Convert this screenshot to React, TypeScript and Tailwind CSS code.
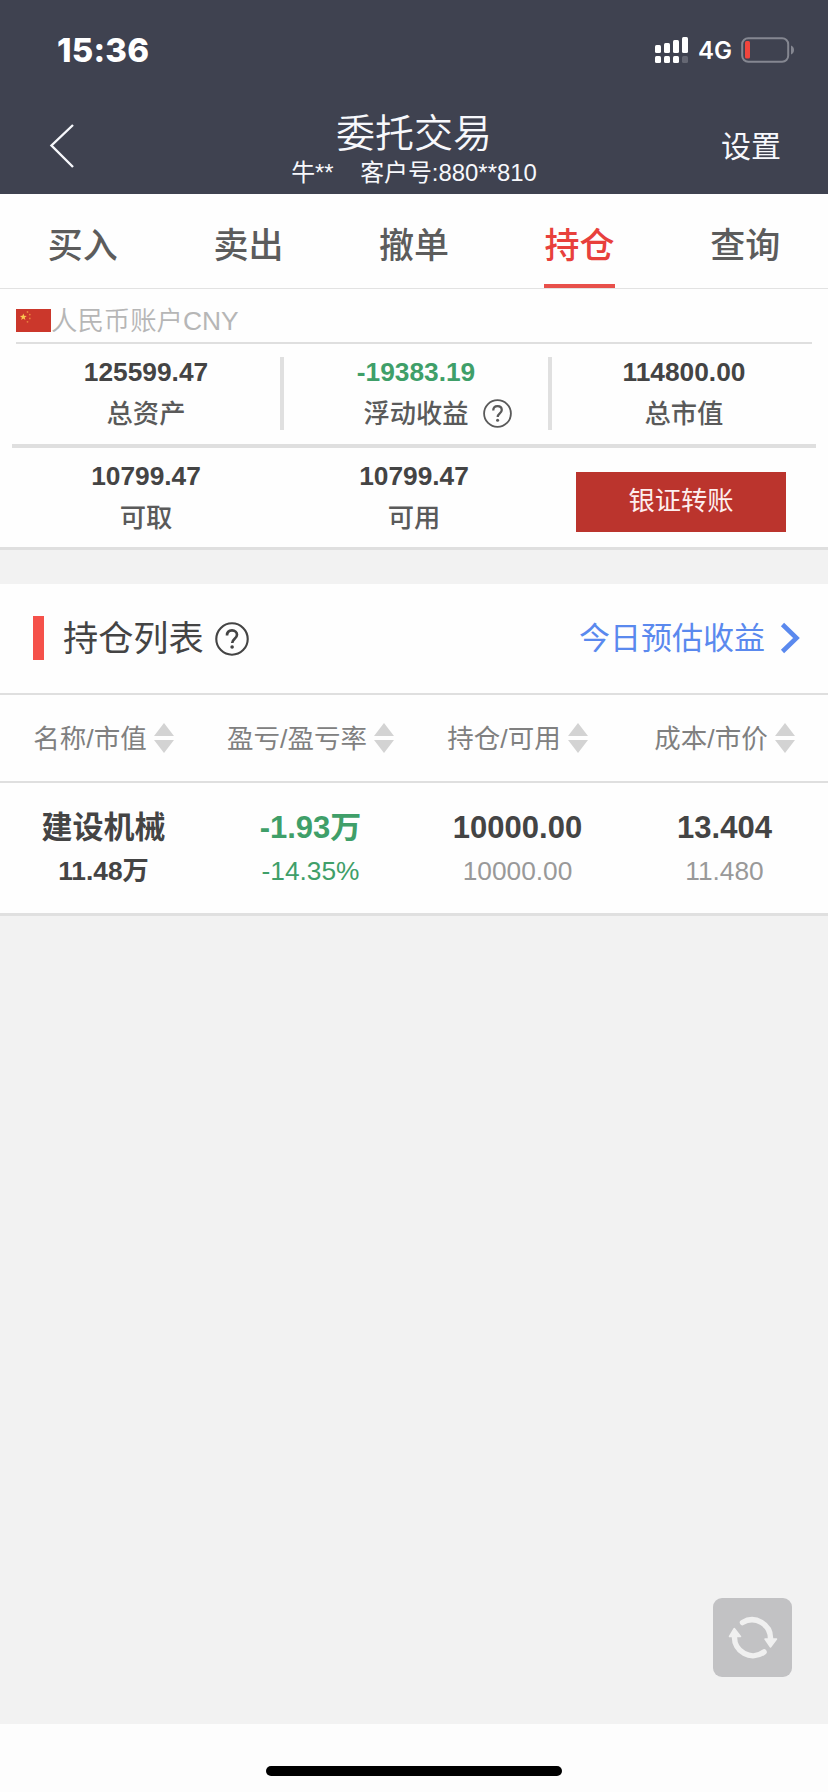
import React from "react";

const tabs = ["买入", "卖出", "撤单", "持仓", "查询"];
const columns = ["名称/市值", "盈亏/盈亏率", "持仓/可用", "成本/市价"];

function HelpIcon({ className, stroke }: { className: string; stroke: number }) {
  return (
    <svg viewBox="0 0 32 32" className={className} fill="none" stroke="currentColor" strokeWidth={stroke}>
      <circle cx="16" cy="16" r="14.8" />
      <path d="M11.3 12.8C11.3 9.6 13.3 7.9 16 7.9c2.800 0 4.700 1.700 4.700 4.200 0 3.700-4.500 3.700-4.500 7.700" strokeWidth="2.500" />
      <circle cx="16.100" cy="23.500" r="1.700" fill="currentColor" stroke="none" />
    </svg>
  );
}

function SortIcon() {
  return (
    <svg viewBox="0 0 20 30" className="ml-[7px] h-[30px] w-5 shrink-0 fill-[#d3d3d3]">
      <path d="M10 0L20 13H0zM0 17h20L10 30z" />
    </svg>
  );
}

function Flag() {
  return (
    <svg viewBox="0 0 35 23" className="h-[23px] w-[35px] shrink-0">
      <rect width="35" height="23" fill="#cb372b" />
      <path d="M7.300 4.500l.9 2.300 2.500.1-2 1.500.7 2.500-2.100-1.400-2.100 1.400.7-2.500-2-1.500 2.500-.1z" fill="#fbc750" />
      <g fill="#e8803f">
        <circle cx="11.500" cy="3" r="0.900" />
        <circle cx="13.800" cy="5.600" r="0.900" />
        <circle cx="13.800" cy="9.400" r="0.900" />
        <circle cx="11.500" cy="12.800" r="0.900" />
      </g>
    </svg>
  );
}

function Stat({ value, label, green, divider, help }: { value: string; label: string; green?: boolean; divider?: boolean; help?: boolean }) {
  return (
    <div className={"flex h-[73px] w-1/3 flex-col items-center " + (divider ? "border-l-4 border-[#e0e0e0]" : "")}>
      <div className={"h-[35px] shrink-0 text-[26.300px] leading-[30px] font-bold " + (green ? "text-[#3f9f69]" : "text-[#444]")}>{value}</div>
      <div className="flex h-[44px] shrink-0 items-center text-[26.300px] leading-[44px] font-medium text-[#5a5a5a]">
        {label}
        {help && <HelpIcon className="-mt-px -mr-[43px] ml-[14px] h-[29px] w-[29px]" stroke={2} />}
      </div>
    </div>
  );
}

function Figure({ text, unit }: { text: string; unit?: string }) {
  return (
    <>
      {text}
      {unit && <span className="font-semibold">{unit}</span>}
    </>
  );
}

function Cell({ top, topUnit, bottom, bottomUnit, tone }: { top: string; topUnit?: string; bottom: string; bottomUnit?: string; tone: string }) {
  return (
    <div className={"flex w-1/4 flex-col items-center " + (tone === "green" ? "text-[#3f9f69]" : "text-[#444]")}>
      <div className="h-[43px] text-[31px] leading-[44px] font-bold">
        <Figure text={top} unit={topUnit} />
      </div>
      <div className={"h-[44px] text-[26.300px] leading-[44px] " + (tone === "name" ? "font-bold" : tone === "gray" ? "text-[#999]" : "")}>
        <Figure text={bottom} unit={bottomUnit} />
      </div>
    </div>
  );
}

export default function App() {
  return (
    <div className="flex h-[1792px] w-[828px] flex-col overflow-hidden bg-[#f2f2f2] font-['Liberation_Sans','Noto_Sans_CJK_SC',sans-serif] whitespace-nowrap">
      <header className="h-[194px] shrink-0 bg-[#3f4250] text-[#f7f8fc]">
        <div className="flex h-[100px] items-center justify-between pr-[33px] pl-[57px]">
          <div className="font-['Inter',sans-serif] text-[33px] leading-[40px] font-extrabold tracking-[0.2px] text-white">15:36</div>
          <div className="flex items-center">
            <svg viewBox="0 0 34 26" className="h-[26px] w-[34px] fill-white">
              <rect x="0" y="8" width="6" height="8" rx="1.500" />
              <rect x="9" y="6" width="6" height="10" rx="1.500" />
              <rect x="18" y="3" width="6" height="13" rx="1.500" />
              <rect x="27" y="0" width="6" height="16" rx="1.500" />
              <rect x="0" y="19" width="6" height="7" rx="1.500" />
              <rect x="9" y="19" width="6" height="7" rx="1.500" />
              <rect x="18" y="19" width="6" height="7" rx="1.500" />
              <rect x="27" y="19" width="6" height="7" rx="1.500" fillOpacity="0.2" />
            </svg>
            <div className="ml-[9px] w-[34px] pt-[2px] font-['Inter',sans-serif] text-[24px] leading-[30px] font-semibold text-white">4G</div>
            <svg viewBox="0 0 54 26" className="ml-[9px] h-[26px] w-[54px]">
              <rect x="1.200" y="1.200" width="46" height="23.600" rx="6" fill="none" stroke="#858791" strokeWidth="2" />
              <rect x="4" y="4" width="5" height="17.500" rx="1.500" fill="#f1453d" />
              <path d="M50 8.500c4 1.500 4 7.500 0 9z" fill="#858791" />
            </svg>
          </div>
        </div>
        <div className="grid h-[94px] grid-cols-[200px_428px_200px]">
          <svg viewBox="0 0 26 46" className="mt-[23px] ml-[49px] h-[46px] w-[26px]" fill="none" stroke="currentColor" strokeWidth="2.400">
            <path d="M24 2L2.500 22.500L24 44" />
          </svg>
          <div className="flex flex-col items-center">
            <div className="mt-[10px] h-[48px] text-[39px] leading-[48px] font-[350]">委托交易</div>
            <div className="h-[28px] text-[23.900px] leading-[30px] whitespace-pre">{"牛**    客户号:880**810"}</div>
          </div>
          <div className="mt-[26px] mr-[47px] text-right text-[30px] leading-[42px]">设置</div>
        </div>
      </header>

      <nav className="flex h-[95px] shrink-0 border-b border-[#e2e2e2] bg-[#fefefe]">
        {tabs.map((tab) => (
          <div key={tab} className="flex flex-1 justify-center">
            <div
              className={
                "h-[94px] w-[71px] text-center text-[35px] leading-[104px] font-medium " +
                (tab === "持仓" ? "border-b-4 border-[#e8504b] text-[#e8403c]" : "text-[#5c5c5c]")
              }
            >
              {tab}
            </div>
          </div>
        ))}
      </nav>

      <section className="h-[261px] shrink-0 border-b-[3px] border-[#dfdfdf] bg-[#fefefe]">
        <div className="mx-4 flex h-[55px] items-center border-b-2 border-[#dfdfdf] pt-[10px] text-[26.400px] text-[#b6b6b6]">
          <Flag />
          <span className="mt-[3px] font-[350]">人民币账户CNY</span>
        </div>
        <div className="mx-[12px] flex h-[104px] border-b-4 border-[#dfdfdf] pt-[13px]">
          <Stat value="125599.47" label="总资产" />
          <Stat value="-19383.19" label="浮动收益" green divider help />
          <Stat value="114800.00" label="总市值" divider />
        </div>
        <div className="mx-[12px] flex pt-[13px]">
          <Stat value="10799.47" label="可取" />
          <Stat value="10799.47" label="可用" />
          <div className="w-1/3">
            <button className="mt-[11px] ml-[28px] block h-[60px] w-[210px] bg-[#bb342d] pb-[2px] text-[26.300px] leading-[58px] text-[#fdeeee]">银证转账</button>
          </div>
        </div>
      </section>

      <section className="mt-[34px] h-[332px] shrink-0 border-b-[3px] border-[#e0e0e0] bg-[#fefefe]">
        <div className="flex h-[111px] items-center border-b-2 border-[#dfdfdf] pr-[28px] pb-px pl-[33px]">
          <div className="h-[44px] w-[11px] bg-[#f5514a]" />
          <div className="mt-[2px] ml-[19px] text-[35.200px] leading-[48px] text-[#444]">持仓列表</div>
          <HelpIcon className="mt-px ml-[11px] h-[34px] w-[34px] text-[#444]" stroke={2} />
          <div className="mt-px ml-auto text-[31px] leading-[48px] text-[#5a89ee]">今日预估收益</div>
          <svg viewBox="0 0 20 32" className="ml-[15px] h-8 w-5" fill="none" stroke="#5a89ee" strokeWidth="4.600">
            <path d="M2.500 2.500L16.500 16L2.500 29.500" />
          </svg>
        </div>
        <div className="flex h-[88px] items-center border-b-2 border-[#dfdfdf] text-[26.500px] text-[#808080]">
          {columns.map((c) => (
            <div key={c} className="flex w-1/4 items-center justify-center">
              <span className="pt-[3px]">{c}</span>
              <SortIcon />
            </div>
          ))}
        </div>
        <div className="flex pt-[23px]">
          <Cell top="" topUnit="建设机械" bottom="11.48" bottomUnit="万" tone="name" />
          <Cell top="-1.93" topUnit="万" bottom="-14.35%" tone="green" />
          <Cell top="10000.00" bottom="10000.00" tone="gray" />
          <Cell top="13.404" bottom="11.480" tone="gray" />
        </div>
      </section>

      <main className="flex flex-1 flex-col items-end justify-end pr-[36px] pb-[47px]">
        <button className="flex h-[79px] w-[79px] items-center justify-center rounded-[9px] bg-[#c2c2c4]">
          <svg viewBox="0 0 79 79" className="h-[79px] w-[79px]" fill="none" stroke="#f0f0f0" strokeWidth="5.500" strokeLinecap="round">
            <path d="M29.500 24.500A18.500 18.500 0 0 1 57.500 41" />
            <path d="M51 54A18.500 18.500 0 0 1 21.500 38" />
            <path d="M52 41h11.500l-6 8z" fill="#f0f0f0" strokeWidth="1.500" strokeLinejoin="round" />
            <path d="M16.500 38.500h11l-6.200-8z" fill="#f0f0f0" strokeWidth="1.500" strokeLinejoin="round" />
          </svg>
        </button>
      </main>
      <footer className="flex h-[68px] shrink-0 items-start justify-center bg-[#fdfdfd] pt-[42px]">
        <div className="h-[10px] w-[296px] rounded-full bg-black" />
      </footer>
    </div>
  );
}
